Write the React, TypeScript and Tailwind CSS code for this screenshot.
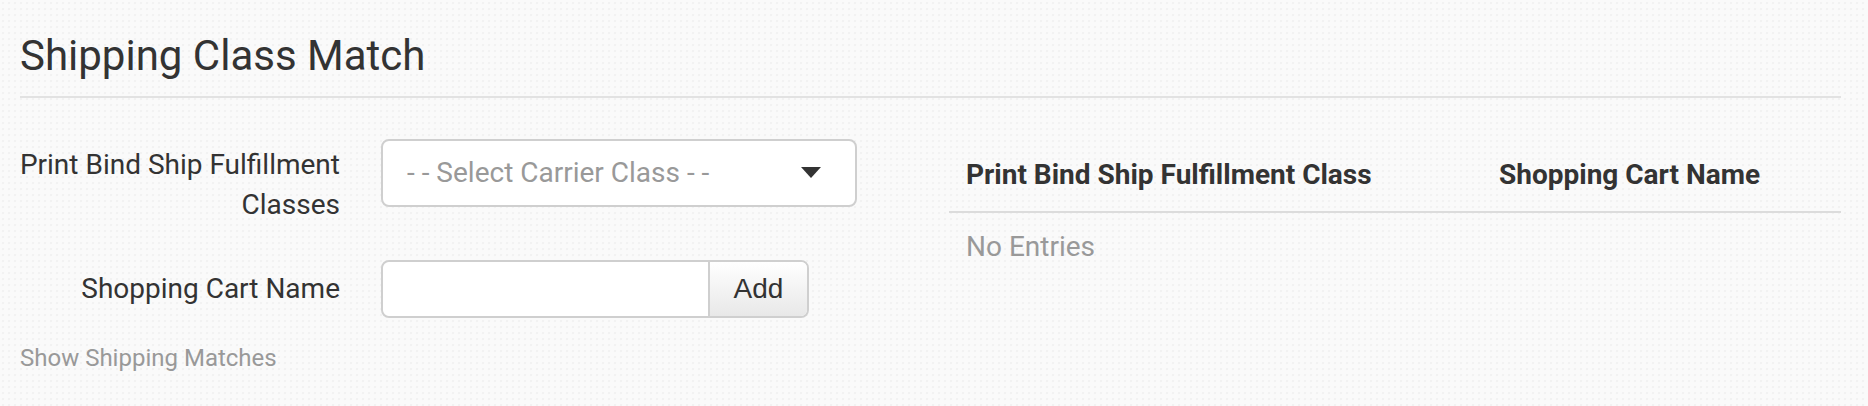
import React from "react";

export default function App() {
  return (
    <div className="min-h-screen w-full bg-[#fafafa] bg-[radial-gradient(#f2f2f2_1px,transparent_1.6px)] bg-[length:6px_6px] font-['Roboto',sans-serif] text-[#333]">
      <div className="pl-[20px] pr-[27px] pt-[33px] pb-[20px]">
        <h1 className="text-[42px] leading-[46px] font-normal text-[#333]">Shipping Class Match</h1>
        <div className="mt-[17px] h-[2px] bg-[#e2e2e2]" />
        <div className="mt-[41px] flex items-start">
          {/* Left form */}
          <div className="w-[837px] flex flex-col">
            <div className="flex items-start">
              <label className="-ml-[20px] w-[340px] whitespace-nowrap text-right text-[28px] leading-[40px] pt-[6px] text-[#333]">
                Print Bind Ship Fulfillment
                <br />
                Classes
              </label>
              <div className="ml-[41px] flex h-[68px] w-[476px] items-center justify-between rounded-[8px] border-2 border-[#cfcfcf] bg-white pl-[24px] pr-[34px]">
                <span className="text-[28px] leading-[40px] text-[#999]">- - Select Carrier Class - -</span>
                <svg width="20" height="11" viewBox="0 0 20 11" className="mt-[-2px]">
                  <path d="M0 0 H20 L10 11 Z" fill="#333" />
                </svg>
              </div>
            </div>
            <div className="mt-[35px] flex items-center">
              <label className="w-[320px] whitespace-nowrap text-right text-[28px] leading-[40px] text-[#333]">Shopping Cart Name</label>
              <div className="ml-[41px] flex h-[58px] w-[428px] rounded-[8px] border-2 border-[#cfcfcf] bg-white">
                <input className="min-w-0 flex-1 rounded-l-[8px] bg-white outline-none" />
                <button className="w-[99px] rounded-r-[6px] border-l-2 border-[#cfcfcf] bg-gradient-to-b from-white to-[#e8e8e8] font-['Liberation_Sans',Arial,sans-serif] text-[28px] text-[#333]">
                  Add
                </button>
              </div>
            </div>
            <div className="mt-[23px] text-[24px] leading-[34px] text-[#999]">Show Shipping Matches</div>
          </div>
          {/* Right table */}
          <div className="ml-auto w-[892px]">
            <div className="flex border-b-2 border-[#dcdcdc] py-[16px]">
              <div className="w-[534px] pl-[17px] text-[28px] leading-[40px] font-bold text-[#333]">
                Print Bind Ship Fulfillment Class
              </div>
              <div className="flex-1 pl-[16px] text-[28px] leading-[40px] font-bold text-[#333]">Shopping Cart Name</div>
            </div>
            <div className="py-[14px] pl-[17px] text-[28px] leading-[40px] text-[#999]">No Entries</div>
          </div>
        </div>
      </div>
    </div>
  );
}
